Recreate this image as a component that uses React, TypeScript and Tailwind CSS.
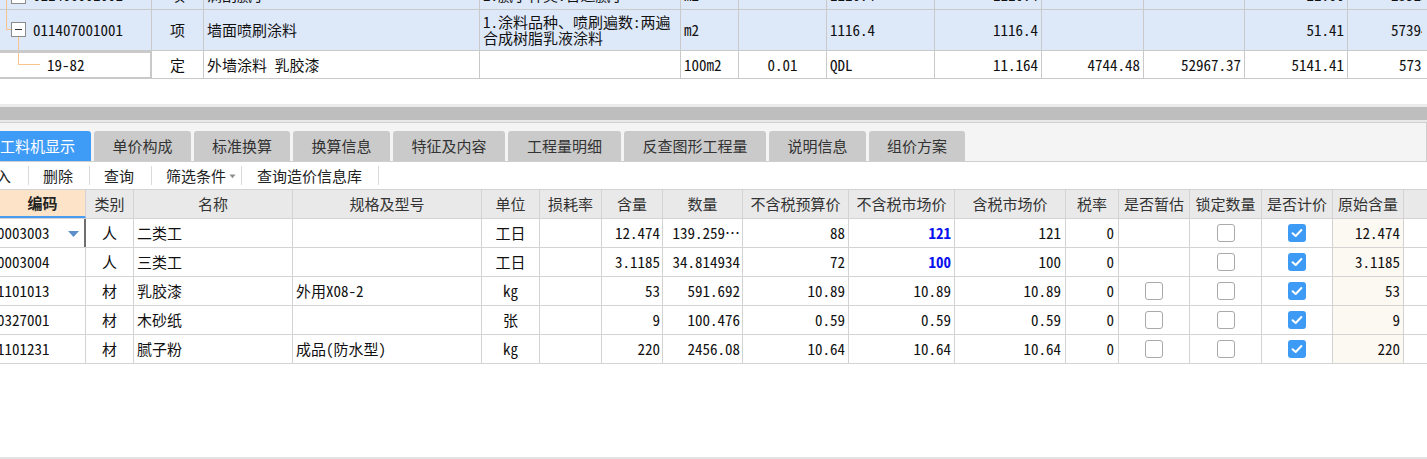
import React from 'react';

const CELL = "font-['Noto_Sans_Mono_CJK_SC','Noto_Sans_CJK_SC',monospace] text-[15px] leading-[16px] text-[#111]";
const UI = "font-['Noto_Sans_CJK_SC',sans-serif] text-[15px] leading-[18px]";

const topW = ['w-[152px]', 'w-[52px]', 'w-[276px]', 'w-[201px]', 'w-[58px]', 'w-[88px]', 'w-[108px]', 'w-[107px]', 'w-[102px]', 'w-[101px]', 'w-[103px]', 'w-[74px]'];
const topAlign = ['justify-start', 'justify-center', 'justify-start', 'justify-start', 'justify-start', 'justify-center', 'justify-start', 'justify-end', 'justify-end', 'justify-end', 'justify-end', 'justify-start'];

const botW = ['w-[86px]', 'w-[48px]', 'w-[159px]', 'w-[189px]', 'w-[58px]', 'w-[62px]', 'w-[61px]', 'w-[80px]', 'w-[106px]', 'w-[106px]', 'w-[111px]', 'w-[53px]', 'w-[71px]', 'w-[72px]', 'w-[71px]', 'w-[71px]'];
const headers = ['编码', '类别', '名称', '规格及型号', '单位', '损耗率', '含量', '数量', '不含税预算价', '不含税市场价', '含税市场价', '税率', '是否暂估', '锁定数量', '是否计价', '原始含量'];

const tabs = [
  { label: '单价构成', w: 'w-[97px]' },
  { label: '标准换算', w: 'w-[96px]' },
  { label: '换算信息', w: 'w-[97px]' },
  { label: '特征及内容', w: 'w-[112px]' },
  { label: '工程量明细', w: 'w-[113px]' },
  { label: '反查图形工程量', w: 'w-[142px]' },
  { label: '说明信息', w: 'w-[97px]' },
  { label: '组价方案', w: 'w-[96px]' },
];

type Row = {
  code: string;
  kind: string;
  name: string;
  spec: string;
  unit: string;
  content: string;
  qty: string;
  budget: string;
  market: string;
  blue: boolean;
  taxed: string;
  est: boolean | null;
  orig: string;
};

const rows: Row[] = [
  { code: '0003003', kind: '人', name: '二类工', spec: '', unit: '工日', content: '12.474', qty: '139.259…', budget: '88', market: '121', blue: true, taxed: '121', est: null, orig: '12.474' },
  { code: '0003004', kind: '人', name: '三类工', spec: '', unit: '工日', content: '3.1185', qty: '34.814934', budget: '72', market: '100', blue: true, taxed: '100', est: null, orig: '3.1185' },
  { code: '1101013', kind: '材', name: '乳胶漆', spec: '外用X08-2', unit: 'kg', content: '53', qty: '591.692', budget: '10.89', market: '10.89', blue: false, taxed: '10.89', est: false, orig: '53' },
  { code: '0327001', kind: '材', name: '木砂纸', spec: '', unit: '张', content: '9', qty: '100.476', budget: '0.59', market: '0.59', blue: false, taxed: '0.59', est: false, orig: '9' },
  { code: '1101231', kind: '材', name: '腻子粉', spec: '成品(防水型)', unit: 'kg', content: '220', qty: '2456.08', budget: '10.64', market: '10.64', blue: false, taxed: '10.64', est: false, orig: '220' },
];

function Check({ on }: { on: boolean }) {
  if (on) {
    return (
      <span className="w-[18px] h-[18px] rounded-[3px] bg-[#3e9bf5] flex items-center justify-center">
        <svg width="12" height="10" viewBox="0 0 12 10">
          <path d="M1.6 5.2 4.7 8 10.4 2" fill="none" stroke="white" strokeWidth="2" strokeLinecap="round" strokeLinejoin="round" />
        </svg>
      </span>
    );
  }
  return <span className="w-[18px] h-[18px] rounded-[3px] border border-[#a9a9a9] bg-white" />;
}

function TopCell({ i, children, className = '' }: { i: number; children?: React.ReactNode; className?: string }) {
  return (
    <div className={`${topW[i]} ${topAlign[i]} shrink-0 border-r border-[#c9c9c9] flex items-center px-[3px] overflow-hidden whitespace-nowrap ${className}`}>
      {children}
    </div>
  );
}

function TopGrid() {
  return (
    <div className={`h-[104px] shrink-0 overflow-hidden bg-white ${CELL}`}>
      {/* partly scrolled-off parent row */}
      <div className="-mt-[19px] h-[29px] flex bg-[#dde8f9] border-b border-[#c9c9c9]">
        <TopCell i={0} className="relative pl-[33px]">
          <span className="absolute left-[6px] top-0 bottom-0 w-px bg-[#f7c48e]" />
          <span className="absolute left-[11px] top-[8px] w-[15px] h-[15px] border border-[#8c8c8c] bg-white" />
          011406001001
        </TopCell>
        <TopCell i={1}>项</TopCell>
        <TopCell i={2}>满刮腻子</TopCell>
        <TopCell i={3}>2.腻子种类:普通腻子</TopCell>
        <TopCell i={4}>m2</TopCell>
        <TopCell i={5} />
        <TopCell i={6}>1116.4</TopCell>
        <TopCell i={7}>1116.4</TopCell>
        <TopCell i={8} />
        <TopCell i={9} />
        <TopCell i={10}>21.06</TopCell>
        <TopCell i={11} className="border-r-0 pl-[43px]">23511.38</TopCell>
        <div className="flex-1" />
      </div>

      <div className="h-[41px] flex bg-[#dde8f9] border-b border-[#c9c9c9]">
        <TopCell i={0} className="relative pl-[33px]">
          <span className="absolute left-[6px] top-0 h-[20px] w-px bg-[#f7c48e]" />
          <span className="absolute left-[6px] top-[19px] w-[5px] h-px bg-[#f7c48e]" />
          <span className="absolute left-[11px] top-[12px] w-[15px] h-[15px] border border-[#8c8c8c] bg-white">
            <span className="absolute left-[3px] right-[3px] top-[6px] h-px bg-[#333]" />
          </span>
          <span className="absolute left-[18px] top-[27px] bottom-0 w-px bg-[#f7c48e]" />
          011407001001
        </TopCell>
        <TopCell i={1}>项</TopCell>
        <TopCell i={2}>墙面喷刷涂料</TopCell>
        <TopCell i={3} className="whitespace-normal">
          <span>
            1.涂料品种、喷刷遍数:两遍
            <br />
            合成树脂乳液涂料
          </span>
        </TopCell>
        <TopCell i={4}>m2</TopCell>
        <TopCell i={5} />
        <TopCell i={6}>1116.4</TopCell>
        <TopCell i={7}>1116.4</TopCell>
        <TopCell i={8} />
        <TopCell i={9} />
        <TopCell i={10}>51.41</TopCell>
        <TopCell i={11} className="border-r-0 pl-[43px]">57394.12</TopCell>
        <div className="flex-1" />
      </div>

      <div className="h-[28px] flex bg-white border-b border-[#c9c9c9]">
        <TopCell i={0} className="relative pl-[47px] border-t-2 border-r-2 border-b-2 border-[#5aa2f2] -mb-px">
          <span className="absolute left-[18px] top-0 h-[12px] w-px bg-[#f7c48e]" />
          <span className="absolute left-[18px] top-[11px] w-[22px] h-px bg-[#f7c48e]" />
          19-82
        </TopCell>
        <TopCell i={1}>定</TopCell>
        <TopCell i={2}>外墙涂料 乳胶漆</TopCell>
        <TopCell i={3} />
        <TopCell i={4}>100m2</TopCell>
        <TopCell i={5}>0.01</TopCell>
        <TopCell i={6}>QDL</TopCell>
        <TopCell i={7}>11.164</TopCell>
        <TopCell i={8}>4744.48</TopCell>
        <TopCell i={9}>52967.37</TopCell>
        <TopCell i={10}>5141.41</TopCell>
        <TopCell i={11} className="border-r-0 pl-[51px]">57398.7</TopCell>
        <div className="flex-1" />
      </div>
    </div>
  );
}

function Splitter() {
  return (
    <div className="shrink-0">
      <div className="h-[3px] bg-[#ebebeb]" />
      <div className="h-[13px] bg-[#bebebe]" />
      <div className="h-[2px] bg-[#e9e9e9]" />
    </div>
  );
}

function Tabs() {
  return (
    <div className={`shrink-0 h-[40px] pt-[8px] bg-[#f4f4f4] border-t border-b border-r border-[#cfcfcf] flex items-end gap-[3px] ${UI}`}>
      <div className="w-[91px] h-[30px] bg-[#3f9cf6] rounded-tr-[3px] text-white flex items-center overflow-hidden whitespace-nowrap">
        工料机显示
      </div>
      {tabs.map((t) => (
        <div key={t.label} className={`${t.w} h-[30px] bg-[#cacaca] rounded-t-[3px] text-[#333] flex items-center justify-center whitespace-nowrap`}>
          {t.label}
        </div>
      ))}
    </div>
  );
}

function Sep() {
  return <span className="w-px h-[19px] bg-[#dadada] shrink-0" />;
}

function Toolbar() {
  return (
    <div className={`shrink-0 h-[27px] flex items-center text-[#222] bg-white ${UI}`}>
      <span className="w-[28px] shrink-0 overflow-hidden">
        <span className="block -ml-[4px]">入</span>
      </span>
      <Sep />
      <span className="w-[60px] pl-[14px] shrink-0">删除</span>
      <Sep />
      <span className="w-[61px] pl-[14px] shrink-0">查询</span>
      <Sep />
      <span className="w-[89px] pl-[14px] shrink-0 flex items-center">
        筛选条件
        <svg width="8" height="5" viewBox="0 0 8 5" className="ml-[3px] mt-[2px]">
          <path d="M0.5 0.5h6L3.5 4.2z" fill="#8d8d8d" />
        </svg>
      </span>
      <Sep />
      <span className="w-[136px] pl-[15px] shrink-0">查询造价信息库</span>
      <Sep />
    </div>
  );
}

function BotCell({ i, children, className = '' }: { i: number; children?: React.ReactNode; className?: string }) {
  return (
    <div className={`${botW[i]} shrink-0 h-full border-r border-[#d3d3d3] flex items-center overflow-hidden whitespace-nowrap ${className}`}>
      {children}
    </div>
  );
}

function MaterialGrid() {
  return (
    <div className="shrink-0">
      <div className={`h-[30px] flex border-t border-b border-[#d3d3d3] bg-[#e9e9e9] text-[#333] ${UI}`}>
        {headers.map((h, i) => (
          <div
            key={h}
            className={`${botW[i]} shrink-0 border-r border-[#d3d3d3] flex items-center justify-center whitespace-nowrap ${
              i === 0 ? 'bg-[#fde4c8] font-bold border-b-2 border-b-[#4a9cf2] text-[#222]' : ''
            }`}
          >
            {h}
          </div>
        ))}
      </div>
      <div className={CELL}>
        {rows.map((r, idx) => (
          <div key={r.code} className="h-[29px] flex border-b border-[#d3d3d3] bg-white">
            <BotCell i={0} className={`relative ${idx === 0 ? 'border-r-2 border-r-[#6f6f6f]' : ''}`}>
              <span className="-ml-[3px]">{r.code}</span>
              {idx === 0 && (
                <svg width="11" height="6" viewBox="0 0 11 6" className="absolute left-[68px] top-[12px]">
                  <path d="M0 0h11L5.5 6z" fill="#5d8fcb" />
                </svg>
              )}
            </BotCell>
            <BotCell i={1} className="justify-center">{r.kind}</BotCell>
            <BotCell i={2} className="pl-[3px]">{r.name}</BotCell>
            <BotCell i={3} className="pl-[3px]">{r.spec}</BotCell>
            <BotCell i={4} className="justify-center">{r.unit}</BotCell>
            <BotCell i={5} />
            <BotCell i={6} className="justify-end pr-[2px]">{r.content}</BotCell>
            <BotCell i={7} className="justify-end pr-[2px]">{r.qty}</BotCell>
            <BotCell i={8} className="justify-end pr-[3px]">{r.budget}</BotCell>
            <BotCell i={9} className={`justify-end pr-[3px] ${r.blue ? 'text-[#0a10ee] font-bold' : ''}`}>{r.market}</BotCell>
            <BotCell i={10} className="justify-end pr-[4px]">{r.taxed}</BotCell>
            <BotCell i={11} className="justify-end pr-[4px]">0</BotCell>
            <BotCell i={12} className="justify-center">{r.est === null ? null : <Check on={r.est} />}</BotCell>
            <BotCell i={13} className="justify-center"><Check on={false} /></BotCell>
            <BotCell i={14} className="justify-center"><Check on={true} /></BotCell>
            <BotCell i={15} className="justify-end pr-[3px] bg-[#fcf9f3]">{r.orig}</BotCell>
          </div>
        ))}
      </div>
    </div>
  );
}

export default function App() {
  return (
    <div className="w-full h-[459px] overflow-hidden bg-white flex flex-col">
      <TopGrid />
      <Splitter />
      <Tabs />
      <Toolbar />
      <MaterialGrid />
      <div className="flex-1" />
      <div className="h-[2px] bg-[#e3e3e3] shrink-0" />
    </div>
  );
}
